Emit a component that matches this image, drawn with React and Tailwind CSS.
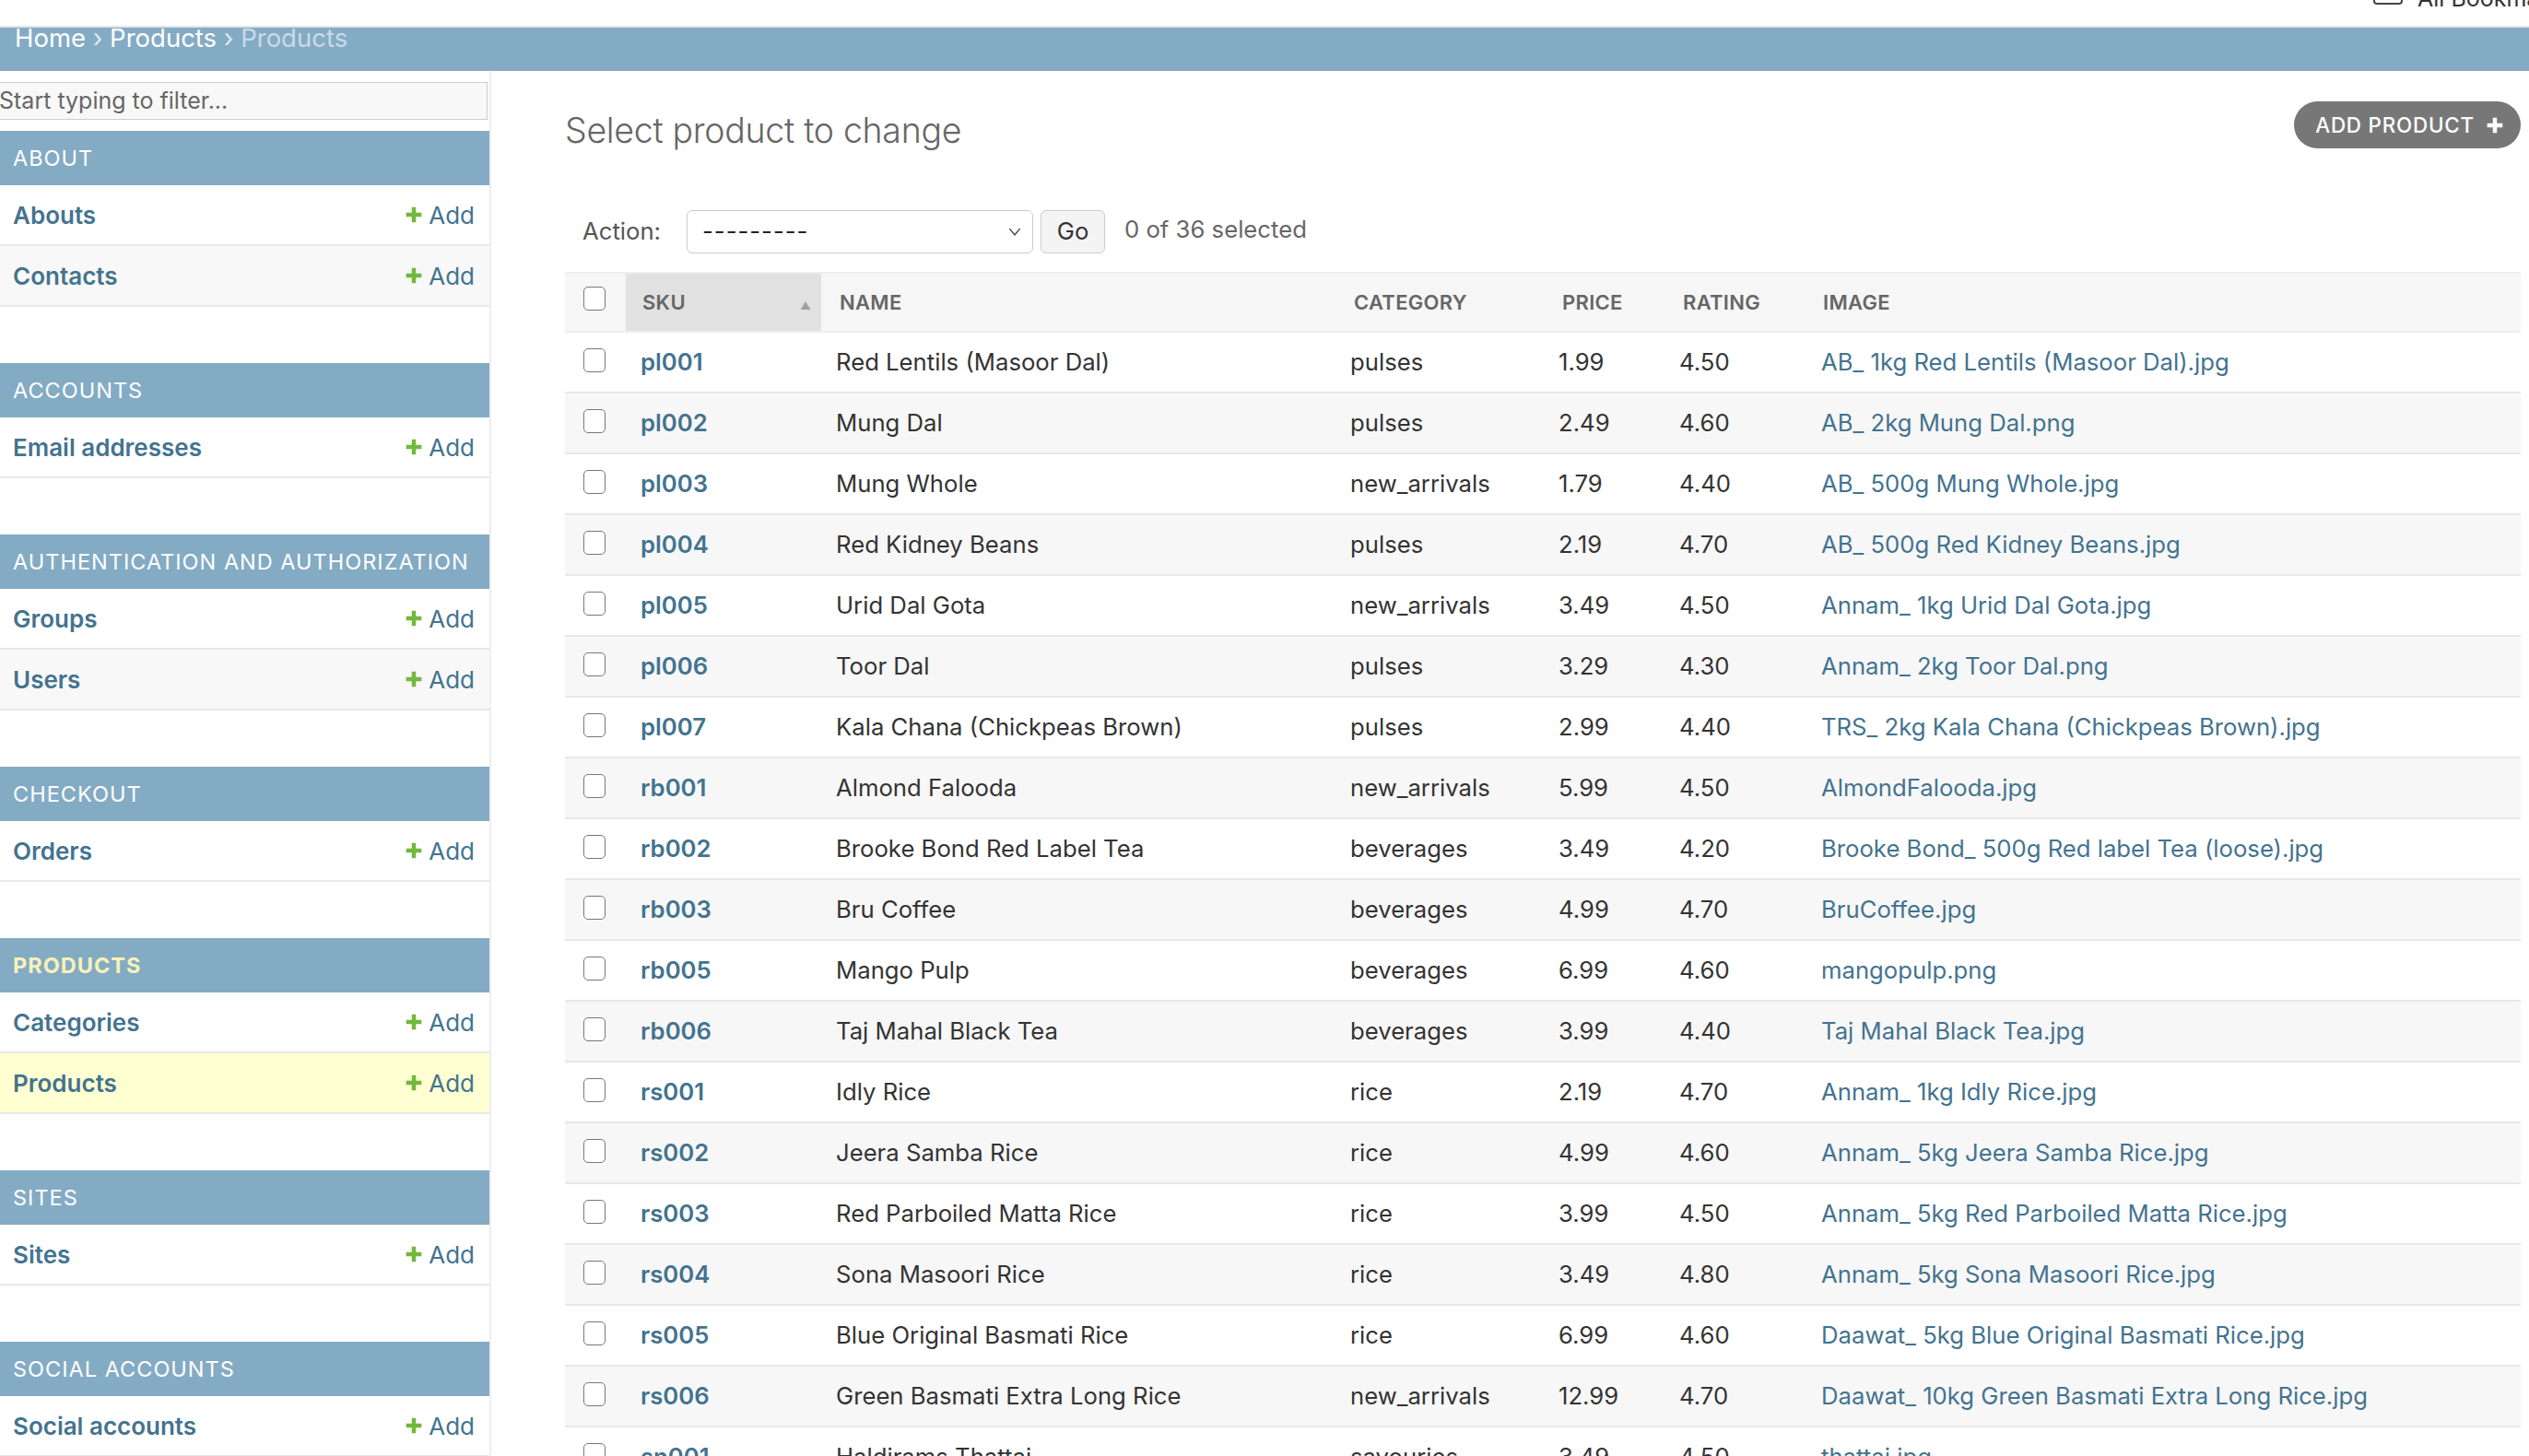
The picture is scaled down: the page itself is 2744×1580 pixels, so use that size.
const sections = [
  { title: "About", rows: ["Abouts", "Contacts"] },
  { title: "Accounts", rows: ["Email addresses"] },
  { title: "Authentication and Authorization", rows: ["Groups", "Users"] },
  { title: "Checkout", rows: ["Orders"] },
  { title: "Products", rows: ["Categories", "Products"], current: true },
  { title: "Sites", rows: ["Sites"] },
  { title: "Social accounts", rows: ["Social accounts"] },
];

const products = [
  ["pl001", "Red Lentils (Masoor Dal)", "pulses", "1.99", "4.50", "AB_ 1kg Red Lentils (Masoor Dal).jpg"],
  ["pl002", "Mung Dal", "pulses", "2.49", "4.60", "AB_ 2kg Mung Dal.png"],
  ["pl003", "Mung Whole", "new_arrivals", "1.79", "4.40", "AB_ 500g Mung Whole.jpg"],
  ["pl004", "Red Kidney Beans", "pulses", "2.19", "4.70", "AB_ 500g Red Kidney Beans.jpg"],
  ["pl005", "Urid Dal Gota", "new_arrivals", "3.49", "4.50", "Annam_ 1kg Urid Dal Gota.jpg"],
  ["pl006", "Toor Dal", "pulses", "3.29", "4.30", "Annam_ 2kg Toor Dal.png"],
  ["pl007", "Kala Chana (Chickpeas Brown)", "pulses", "2.99", "4.40", "TRS_ 2kg Kala Chana (Chickpeas Brown).jpg"],
  ["rb001", "Almond Falooda", "new_arrivals", "5.99", "4.50", "AlmondFalooda.jpg"],
  ["rb002", "Brooke Bond Red Label Tea", "beverages", "3.49", "4.20", "Brooke Bond_ 500g Red label Tea (loose).jpg"],
  ["rb003", "Bru Coffee", "beverages", "4.99", "4.70", "BruCoffee.jpg"],
  ["rb005", "Mango Pulp", "beverages", "6.99", "4.60", "mangopulp.png"],
  ["rb006", "Taj Mahal Black Tea", "beverages", "3.99", "4.40", "Taj Mahal Black Tea.jpg"],
  ["rs001", "Idly Rice", "rice", "2.19", "4.70", "Annam_ 1kg Idly Rice.jpg"],
  ["rs002", "Jeera Samba Rice", "rice", "4.99", "4.60", "Annam_ 5kg Jeera Samba Rice.jpg"],
  ["rs003", "Red Parboiled Matta Rice", "rice", "3.99", "4.50", "Annam_ 5kg Red Parboiled Matta Rice.jpg"],
  ["rs004", "Sona Masoori Rice", "rice", "3.49", "4.80", "Annam_ 5kg Sona Masoori Rice.jpg"],
  ["rs005", "Blue Original Basmati Rice", "rice", "6.99", "4.60", "Daawat_ 5kg Blue Original Basmati Rice.jpg"],
  ["rs006", "Green Basmati Extra Long Rice", "new_arrivals", "12.99", "4.70", "Daawat_ 10kg Green Basmati Extra Long Rice.jpg"],
  ["sn001", "Haldirams Thattai", "savouries", "3.49", "4.50", "thattai.jpg"],
];

function PlusIcon({ className }) {
  return (
    <svg viewBox="0 0 18 18" className={className}>
      <path d="M7 1.5h4v5.5h5.5v4H11v5.5H7V11H1.5V7H7z" fill="currentColor" />
    </svg>
  );
}

function Checkbox() {
  return <div className="w-[24px] h-[26px] rounded-[5px] border-[1.5px] border-[#777] bg-white" />;
}

function Sidebar() {
  return (
    <aside className="w-[533px] shrink-0 border-r-2 border-[#eee] h-full">
      <div className="pt-[12px] pb-[12px]">
        <div className="-ml-[14px] mr-[2px] h-[41px] border border-[#ccc] bg-[#f8f8f8] pl-[12px] flex items-center text-[25px] text-[#666]">
          Start typing to filter...
        </div>
      </div>
      {sections.map((s) => (
        <div key={s.title} className="mb-[61px]">
          <div
            className={
              "h-[59px] bg-[#84abc4] pl-[14px] flex items-center uppercase text-[23.5px] tracking-[1px] " +
              (s.current ? "text-[#f7f2b8] font-bold" : "text-white")
            }
          >
            {s.title}
          </div>
          {s.rows.map((r, i) => {
            const active = s.current && r === "Products";
            const bg = active ? "bg-[#ffffd2]" : i % 2 === 1 ? "bg-[#f8f8f8]" : "bg-white";
            return (
              <div
                key={r}
                className={"h-[66px] border-b-2 border-[#e8e8e8] flex items-center justify-between pl-[14px] pr-[16px] " + bg}
              >
                <span className="text-[26px] font-semibold text-[#43738f]">{r}</span>
                <span className="flex items-center gap-[6px] text-[26px] text-[#43738f]">
                  <PlusIcon className="w-[20px] h-[20px] text-[#72b83d]" />
                  Add
                </span>
              </div>
            );
          })}
        </div>
      ))}
    </aside>
  );
}

const cols = ["w-[66px]", "w-[212px]", "w-[560px]", "w-[226px]", "w-[131px]", "w-[152px]", "flex-1"];

function ProductTable() {
  return (
    <div className="mt-[20px] border-t-2 border-[#eee]">
      <div className="h-[64px] bg-[#f6f6f6] border-b-2 border-[#eee] flex text-[22px] font-semibold uppercase text-[#666] tracking-[0.3px]">
        <div className={cols[0] + " flex items-start pt-[14px] pl-[20px]"}>
          <Checkbox />
        </div>
        <div className={cols[1] + " bg-[#e1e1e1] flex items-center justify-between pl-[18px] pr-[10px]"}>
          <span>SKU</span>
          <svg viewBox="0 0 12 10" className="w-[14px] h-[11px] mt-[6px]">
            <path d="M6 1L11 9H1z" fill="#a0a0a0" />
          </svg>
        </div>
        <div className={cols[2] + " flex items-center pl-[20px]"}>Name</div>
        <div className={cols[3] + " flex items-center pl-[18px]"}>Category</div>
        <div className={cols[4] + " flex items-center pl-[18px]"}>Price</div>
        <div className={cols[5] + " flex items-center pl-[18px]"}>Rating</div>
        <div className={cols[6] + " flex items-center pl-[18px]"}>Image</div>
      </div>
      {products.map((p, i) => (
        <div
          key={p[0]}
          className={"h-[66px] border-b-2 border-[#e8e8e8] flex text-[25.7px] text-[#333] " + (i % 2 === 1 ? "bg-[#f7f7f7]" : "bg-white")}
        >
          <div className={cols[0] + " flex items-start pt-[17px] pl-[20px]"}>
            <Checkbox />
          </div>
          <div className={cols[1] + " flex items-center pl-[16px] font-semibold text-[#43738f]"}>{p[0]}</div>
          <div className={cols[2] + " flex items-center pl-[16px]"}>{p[1]}</div>
          <div className={cols[3] + " flex items-center pl-[14px]"}>{p[2]}</div>
          <div className={cols[4] + " flex items-center pl-[14px]"}>{p[3]}</div>
          <div className={cols[5] + " flex items-center pl-[14px]"}>{p[4]}</div>
          <div className={cols[6] + " flex items-center pl-[16px] text-[#43738f]"}>{p[5]}</div>
        </div>
      ))}
    </div>
  );
}

export default function App() {
  return (
    <div className="w-[2744px] h-[1580px] overflow-hidden bg-white flex flex-col font-['Inter','Liberation_Sans',sans-serif]">
      <div className="h-[30px] shrink-0 border-b-2 border-[#e4e4e4] flex overflow-hidden">
        <div className="ml-auto w-[201px] flex items-start overflow-hidden">
          <div className="w-[3px] h-[10px] bg-[#d3e0fa]" />
          <div className="ml-[32px] -mt-[12px] w-[32px] h-[17px] shrink-0 border-2 border-[#444] rounded-[4px]" />
          <span className="ml-[16px] -mt-[20px] text-[25px] text-[#333] whitespace-nowrap">All Bookmarks</span>
        </div>
      </div>
      <div className="h-[47px] shrink-0 bg-[#84abc4] pl-[16px] text-[27.5px] leading-[22px] text-white whitespace-nowrap">
        Home <span className="text-[#dfe9f0]">›</span> Products <span className="text-[#dfe9f0]">›</span>{" "}
        <span className="text-[#c8dbe7]">Products</span>
      </div>
      <div className="flex flex-1 min-h-0">
        <Sidebar />
        <main className="flex-1 min-w-0 pl-[80px] pr-[9px]">
          <div className="flex items-start justify-between pt-[33px]">
            <h1 className="mt-[8px] text-[37.5px] font-light text-[#666] leading-[48px] tracking-[-0.3px]">Select product to change</h1>
            <div className="h-[51px] rounded-full bg-[#777] text-white flex items-center gap-[12px] pl-[23px] pr-[18px] text-[22.4px] font-medium uppercase tracking-[0.8px]">
              Add product
              <PlusIcon className="w-[20px] h-[20px] text-white" />
            </div>
          </div>
          <div className="mt-[61px] flex items-center h-[48px] pl-[19px] text-[25.7px] text-[#555]">
            <span>Action:</span>
            <div className="ml-[28px] w-[376px] h-[47px] border-[1.5px] border-[#ccc] rounded-[6px] flex items-center justify-between pl-[16px] pr-[12px] text-[#222]">
              <span className="tracking-[1px]">---------</span>
              <svg viewBox="0 0 12 8" className="w-[14px] h-[9px]">
                <polyline points="1,1 6,7 11,1" fill="none" stroke="#444" strokeWidth="1.3" />
              </svg>
            </div>
            <div className="ml-[8px] w-[70px] h-[47px] border-[1.5px] border-[#ccc] rounded-[6px] bg-[#f4f4f4] flex items-center justify-center text-[#333]">
              Go
            </div>
            <span className="ml-[21px] text-[#666] -mt-[4px]">0 of 36 selected</span>
          </div>
          <ProductTable />
        </main>
      </div>
    </div>
  );
}
